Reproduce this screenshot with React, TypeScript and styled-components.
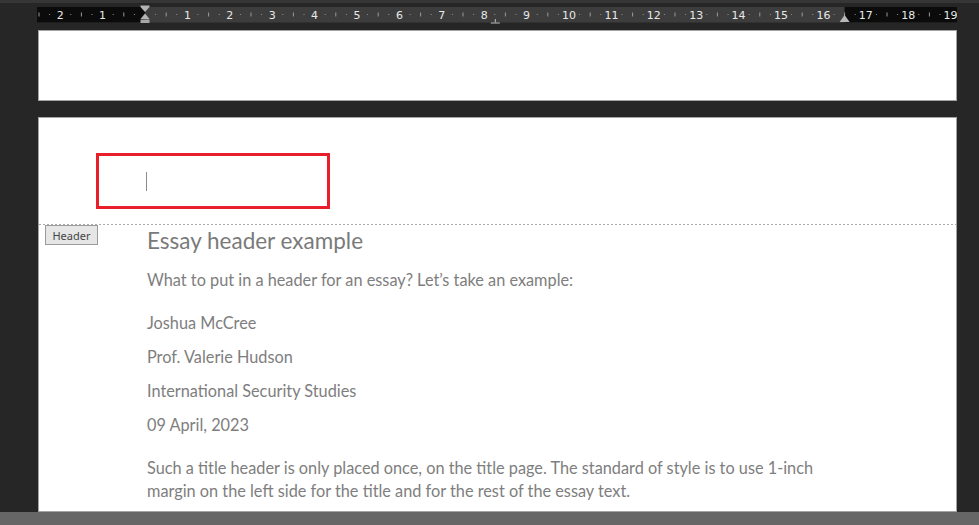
import React from "react";
import styled, { createGlobalStyle } from "styled-components";

const Global = createGlobalStyle`
  html, body { margin: 0; padding: 0; background: #262626; overflow: hidden; }
  #root { width: 979px; height: 525px; }
`;

const Screen = styled.div`
  width: 979px;
  height: 525px;
  display: flex;
  flex-direction: column;
  background: #262626;
  overflow: hidden;
`;

const RulerRow = styled.div`
  height: 30px;
  flex: none;
  padding-left: 37px;
  box-sizing: border-box;
  background: linear-gradient(#363636 0 3px, #262626 3px);
`;

const PagesArea = styled.div`
  flex: 1;
  min-height: 0;
  display: flex;
  flex-direction: column;
  gap: 16px;
  padding-left: 38px;
  overflow: hidden;
`;

const Page = styled.div<{ $h?: number }>`
  width: 919px;
  box-sizing: border-box;
  background: #ffffff;
  border: 1px solid #a3a3a3;
  flex: ${(p) => (p.$h ? "none" : "1")};
  height: ${(p) => (p.$h ? `${p.$h}px` : "auto")};
  position: relative;
  overflow: hidden;
`;

const HeaderZone = styled.div`
  height: 106px;
  box-sizing: border-box;
  padding: 35px 0 0 57px;
`;

const HighlightBox = styled.div`
  width: 234px;
  height: 56px;
  box-sizing: border-box;
  border: 3px solid #e81e2a;
  padding: 16px 0 0 47px;
`;

const Caret = styled.div`
  width: 1px;
  height: 19px;
  background: #8c8c8c;
`;

const DashLine = styled.div`
  height: 1px;
  background-image: repeating-linear-gradient(
    to right,
    #a9a9a9 0 2px,
    transparent 2px 4px
  );
`;

const HeaderTag = styled.div`
  position: absolute;
  left: 6px;
  top: 107px;
  width: 53px;
  height: 20px;
  box-sizing: border-box;
  background: #e6e6e6;
  border: 1px solid #9b9b9b;
  font-family: "Noto Sans", "Open Sans", sans-serif;
  font-size: 11px;
  color: #444;
  display: flex;
  align-items: center;
  justify-content: center;
`;

const Body = styled.div`
  padding-left: 108px;
  font-family: Lato, "Liberation Sans", sans-serif;
  color: #7e7e7e;
`;

const Title = styled.h1`
  margin: 2px 0 0;
  font-size: 22.5px;
  font-weight: 400;
  line-height: 28px;
  color: #7a7a7a;
`;

const Para = styled.p<{ $top: number }>`
  margin: ${(p) => p.$top}px 0 0;
  font-size: 16.3px;
  line-height: 23px;
  width: 700px;
`;

const BottomBar = styled.div`
  height: 13px;
  flex: none;
  background: #666666;
`;

const ORIGIN = 108;
const UNIT = 42.4;

function Ruler() {
  const marks: React.ReactNode[] = [];
  for (let q = -10; q <= 76; q++) {
    const u = q / 4;
    const x = ORIGIN + u * UNIT;
    if (x < 1 || x > 918) continue;
    if (q % 4 === 0) {
      if (u !== 0) {
        marks.push(
          <text
            key={q}
            x={x}
            y={18.8}
            textAnchor="middle"
            fontFamily="'DejaVu Sans', sans-serif"
            fontSize="11"
            fill="#e8e8e8"
          >
            {Math.abs(u)}
          </text>
        );
      }
    } else if (Math.abs(q % 4) === 2) {
      marks.push(<rect key={q} x={x - 0.5} y={12.5} width={1} height={4} fill="#9a9a9a" />);
    } else {
      marks.push(<rect key={q} x={x - 0.5} y={14} width={1} height={1} fill="#8e8e8e" />);
    }
  }
  const rx = ORIGIN + 16.5 * UNIT;
  const tx = ORIGIN + 8.25 * UNIT;
  return (
    <svg width="920" height="30" viewBox="0 0 920 30">
      <rect x="0" y="7" width="920" height="15.5" fill="#3d3d3d" />
      <rect x="0" y="7" width={ORIGIN} height="15.5" fill="#0b0b0b" />
      <rect x={rx} y="7" width={920 - rx} height="15.5" fill="#0b0b0b" />
      {marks}
      <rect x={ORIGIN - 4.5} y="5.5" width="9" height="1.5" fill="#b4b4b4" />
      <polygon points={`${ORIGIN - 4.5},7 ${ORIGIN + 4.5},7 ${ORIGIN},12`} fill="#b4b4b4" />
      <polygon points={`${ORIGIN},13.5 ${ORIGIN - 4.5},19 ${ORIGIN + 4.5},19`} fill="#b4b4b4" />
      <rect x={ORIGIN - 4.5} y="19.5" width="9" height="3.5" fill="#a8a8a8" />
      <polygon points={`${rx},15 ${rx - 5},22 ${rx + 5},22`} fill="#b8b8b8" />
      <rect x={tx} y="19" width="1" height="3.5" fill="#bdbdbd" />
      <rect x={tx - 4} y="22.5" width="9" height="1" fill="#bdbdbd" />
    </svg>
  );
}

export default function App() {
  return (
    <>
      <Global />
      <Screen>
        <RulerRow>
          <Ruler />
        </RulerRow>
        <PagesArea>
          <Page $h={71} />
          <Page>
            <HeaderZone>
              <HighlightBox>
                <Caret />
              </HighlightBox>
            </HeaderZone>
            <DashLine />
            <HeaderTag>Header</HeaderTag>
            <Body>
              <Title>Essay header example</Title>
              <Para $top={13}>What to put in a header for an essay? Let’s take an example:</Para>
              <Para $top={20}>Joshua McCree</Para>
              <Para $top={11}>Prof. Valerie Hudson</Para>
              <Para $top={11}>International Security Studies</Para>
              <Para $top={11}>09 April, 2023</Para>
              <Para $top={20}>
                Such a title header is only placed once, on the title page. The standard of style is to use 1-inch
                margin on the left side for the title and for the rest of the essay text.
              </Para>
            </Body>
          </Page>
        </PagesArea>
        <BottomBar />
      </Screen>
    </>
  );
}
